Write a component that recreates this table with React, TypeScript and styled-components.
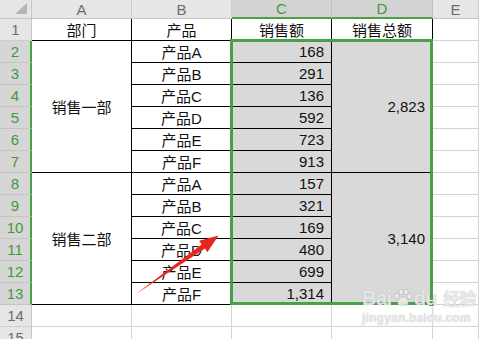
import React from "react";
import styled, { createGlobalStyle } from "styled-components";

const GlobalStyle = createGlobalStyle`
  html, body {
    margin: 0;
    padding: 0;
    background: #ffffff;
    overflow: hidden;
  }
  body {
    font-family: "Liberation Sans", "Noto Sans CJK SC", sans-serif;
  }
`;

const GREEN = "#4aa046";
const GRID = "#d4d4d4";

type Group = { dept: string; total: string; items: [string, string][] };

const groups: Group[] = [
  {
    dept: "销售一部",
    total: "2,823",
    items: [
      ["产品A", "168"],
      ["产品B", "291"],
      ["产品C", "136"],
      ["产品D", "592"],
      ["产品E", "723"],
      ["产品F", "913"],
    ],
  },
  {
    dept: "销售二部",
    total: "3,140",
    items: [
      ["产品A", "157"],
      ["产品B", "321"],
      ["产品C", "169"],
      ["产品D", "480"],
      ["产品E", "699"],
      ["产品F", "1,314"],
    ],
  },
];

const headers = ["部门", "产品", "销售额", "销售总额"];
const columns = ["A", "B", "C", "D", "E"];
const selectedCols = ["C", "D"];

// grid lines: row 1 is the column header, column 1 is the row header
const Sheet = styled.div`
  position: relative;
  display: grid;
  grid-template-columns: 32px 100px 100px 100px 101px 1fr;
  grid-template-rows: 19px repeat(15, 22px);
  width: 479px;
`;

const Corner = styled.div`
  grid-column: 1;
  grid-row: 1;
  background: #e6e6e6;
  border-right: 1px solid #c6c6c6;
  border-bottom: 1px solid #c6c6c6;
  display: flex;
  justify-content: flex-end;
  align-items: flex-end;
  padding: 0 4px 4px 0;
`;

const CornerMark = styled.div`
  width: 0;
  height: 0;
  border-left: 12px solid transparent;
  border-bottom: 11px solid #b5b5b5;
`;

const ColHead = styled.div<{ $sel: boolean; $col: number }>`
  grid-row: 1;
  grid-column: ${(p) => p.$col};
  background: ${(p) => (p.$sel ? "#d3d3d3" : "#e6e6e6")};
  color: ${(p) => (p.$sel ? "#3f9a3c" : "#6d6d6d")};
  border-right: 1px solid ${(p) => (p.$sel ? "#c0c0c0" : "#cdcdcd")};
  border-bottom: ${(p) => (p.$sel ? `2px solid ${GREEN}` : "1px solid #c6c6c6")};
  font-size: 15px;
  display: flex;
  align-items: center;
  justify-content: center;
  box-sizing: border-box;
`;

const RowHead = styled.div<{ $sel: boolean; $row: number }>`
  grid-column: 1;
  grid-row: ${(p) => p.$row};
  background: ${(p) => (p.$sel ? "#d6d6d6" : "#e6e6e6")};
  color: ${(p) => (p.$sel ? "#3f9a3c" : "#6d6d6d")};
  border-right: ${(p) => (p.$sel ? `2px solid ${GREEN}` : "1px solid #c6c6c6")};
  border-bottom: 1px solid ${(p) => (p.$sel ? "#c4c4c4" : "#cfcfcf")};
  font-size: 15px;
  display: flex;
  align-items: center;
  justify-content: center;
  box-sizing: border-box;
`;

const Cell = styled.div<{
  $col: number;
  $row: number;
  $span?: number;
  $line?: string;
  $fill?: string;
  $align?: "center" | "right";
}>`
  grid-column: ${(p) => p.$col};
  grid-row: ${(p) => `${p.$row} / span ${p.$span || 1}`};
  background: ${(p) => p.$fill || "#ffffff"};
  border-right: 1px solid ${(p) => p.$line || GRID};
  border-bottom: 1px solid ${(p) => p.$line || GRID};
  color: #111;
  font-size: 15px;
  display: flex;
  align-items: center;
  justify-content: ${(p) => (p.$align === "right" ? "flex-end" : "center")};
  padding-right: ${(p) => (p.$align === "right" ? "7px" : "0")};
  box-sizing: border-box;
  white-space: nowrap;
`;

const Selection = styled.div`
  position: absolute;
  left: 230px;
  top: 39px;
  width: 203px;
  height: 266px;
  border: 3px solid ${GREEN};
  box-sizing: border-box;
  pointer-events: none;
`;

const FillHandle = styled.div`
  position: absolute;
  right: -5px;
  bottom: -5px;
  width: 5px;
  height: 5px;
  background: ${GREEN};
  border: 1px solid #ffffff;
`;

const Arrow = styled.svg`
  position: absolute;
  left: 0;
  top: 0;
  pointer-events: none;
`;

const Watermark = styled.div`
  position: absolute;
  left: 362px;
  top: 287px;
  display: flex;
  flex-direction: column;
  align-items: flex-start;
  color: rgba(236, 236, 236, 0.9);
  text-shadow: 0 0 1px rgba(140, 140, 140, 0.55);
  pointer-events: none;
`;

const MarkLine = styled.div`
  display: flex;
  align-items: center;
  font-size: 20px;
  font-weight: bold;
  line-height: 22px;
  letter-spacing: -0.5px;
`;

const MarkSub = styled.span`
  margin-left: 6px;
  font-family: "Noto Sans CJK SC", sans-serif;
  font-size: 17px;
  font-weight: bold;
`;

const MarkUrl = styled.div`
  font-size: 12px;
  font-weight: bold;
  margin-top: 2px;
  letter-spacing: 0.2px;
`;

const PawIcon = styled.svg`
  margin: 0 1px;
`;

function Paw() {
  return (
    <PawIcon width="20" height="20" viewBox="0 0 20 20">
      <g fill="rgba(236,236,236,0.9)" stroke="rgba(150,150,150,0.5)" strokeWidth="0.7">
        <ellipse cx="4" cy="8" rx="2.2" ry="2.8" />
        <ellipse cx="8" cy="4" rx="2.2" ry="2.8" />
        <ellipse cx="13" cy="4" rx="2.2" ry="2.8" />
        <ellipse cx="16.5" cy="8.5" rx="2.2" ry="2.8" />
        <path d="M10 9 C6 9 4 14 5 16 C6 18 9 17 10 17 C11 17 14 18 15 16 C16 14 14 9 10 9 Z" />
      </g>
    </PawIcon>
  );
}

export default function App() {
  const body: React.ReactNode[] = [];

  groups.forEach((g, gi) => {
    const start = 3 + gi * 6;
    body.push(
      <Cell key={`dept-${gi}`} $col={2} $row={start} $span={6} $line="#000" $align="center">
        {g.dept}
      </Cell>,
      <Cell key={`total-${gi}`} $col={5} $row={start} $span={6} $line="#000" $fill="#d9d9d9" $align="right">
        {g.total}
      </Cell>
    );
    g.items.forEach(([name, amount], i) => {
      const r = start + i;
      body.push(
        <Cell key={`n-${gi}-${i}`} $col={3} $row={r} $line="#000" $align="center">
          {name}
        </Cell>,
        <Cell key={`a-${gi}-${i}`} $col={4} $row={r} $line="#000" $fill="#d9d9d9" $align="right">
          {amount}
        </Cell>,
        <Cell key={`e-${gi}-${i}`} $col={6} $row={r} />
      );
    });
  });

  return (
    <>
      <GlobalStyle />
      <Sheet>
        <Corner>
          <CornerMark />
        </Corner>
        {columns.map((c, i) => (
          <ColHead key={c} $col={i + 2} $sel={selectedCols.includes(c)}>
            {c}
          </ColHead>
        ))}
        {Array.from({ length: 15 }, (_, i) => (
          <RowHead key={i} $row={i + 2} $sel={i >= 1 && i <= 12}>
            {i + 1}
          </RowHead>
        ))}

        {headers.map((t, i) => (
          <Cell key={t} $col={i + 2} $row={2} $line="#000" $align="center">
            {t}
          </Cell>
        ))}
        <Cell $col={6} $row={2} />

        {body}

        {[15, 16].map((r) =>
          [2, 3, 4, 5, 6].map((c) => <Cell key={`x-${r}-${c}`} $col={c} $row={r} />)
        )}

        <Selection>
          <FillHandle />
        </Selection>

        <Watermark>
          <MarkLine>
            Bai
            <Paw />
            du
            <MarkSub>经验</MarkSub>
          </MarkLine>
          <MarkUrl>jingyan.baidu.com</MarkUrl>
        </Watermark>

        <Arrow width="479" height="339">
          <polygon
            points="136,294 205,248.6 207.4,252.2 218.5,235.6 199.2,240.8 201.6,244.4"
            fill="#e8261c"
          />
        </Arrow>
      </Sheet>
    </>
  );
}
